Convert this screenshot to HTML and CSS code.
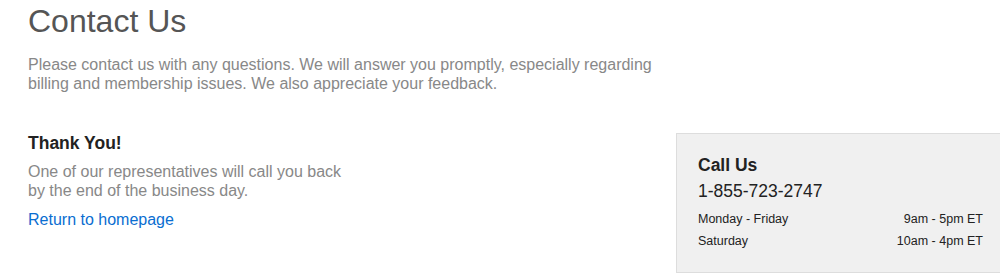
FILE: index.html
```html
<!DOCTYPE html>
<html lang="en">
<head>
<meta charset="utf-8">
<title>Contact Us</title>
<link rel="stylesheet" href="styles.css">
</head>
<body>
<main class="page">
  <h1 class="title">Contact Us</h1>
  <p class="intro">Please contact us with any questions. We will answer you promptly, especially regarding<br>billing and membership issues. We also appreciate your feedback.</p>
  <div class="row">
    <section class="thanks">
      <h2 class="thanks-title">Thank You!</h2>
      <p class="thanks-text">One of our representatives will call you back<br>by the end of the business day.</p>
      <a class="home-link" href="#">Return to homepage</a>
    </section>
    <aside class="call-box">
      <h3 class="call-title">Call Us</h3>
      <div class="call-phone">1-855-723-2747</div>
      <div class="hours">
        <div class="hours-row"><span>Monday - Friday</span><span>9am - 5pm ET</span></div>
        <div class="hours-row"><span>Saturday</span><span>10am - 4pm ET</span></div>
      </div>
    </aside>
  </div>
</main>
</body>
</html>
```
FILE: styles.css
```css
html, body {
  margin: 0;
  padding: 0;
  background: #fff;
  overflow: hidden;
}
body {
  font-family: "Liberation Sans", Arial, sans-serif;
}
.page {
  padding: 3px 0 0 28px;
}
.title {
  margin: 0;
  font-size: 32px;
  font-weight: normal;
  color: #555;
  line-height: 37px;
}
.intro {
  margin: 15px 0 0 0;
  font-size: 16px;
  line-height: 19px;
  color: #888;
}
.row {
  display: flex;
  align-items: flex-start;
  margin-top: 40px;
}
.thanks {
  flex: 1;
}
.thanks-title {
  margin: 0;
  font-size: 17.5px;
  font-weight: bold;
  color: #222;
  line-height: 21px;
}
.thanks-text {
  margin: 8px 0 0 0;
  font-size: 16px;
  line-height: 19px;
  color: #888;
}
.home-link {
  display: block;
  margin-top: 10px;
  font-size: 16px;
  line-height: 19px;
  color: #0a6ed1;
  text-decoration: none;
}
.call-box {
  width: 285px;
  margin-top: 0;
  background: #f0f0f0;
  border: 1px solid #ddd;
  border-right: none;
  padding: 21px 17px 20px 21px;
}
.call-title {
  margin: 0;
  font-size: 17.5px;
  font-weight: bold;
  color: #222;
  line-height: 21px;
}
.call-phone {
  margin-top: 5px;
  font-size: 17.5px;
  line-height: 21px;
  color: #222;
}
.hours {
  margin-top: 6px;
  font-size: 12.5px;
  color: #222;
}
.hours-row {
  display: flex;
  justify-content: space-between;
  line-height: 22px;
}
```
